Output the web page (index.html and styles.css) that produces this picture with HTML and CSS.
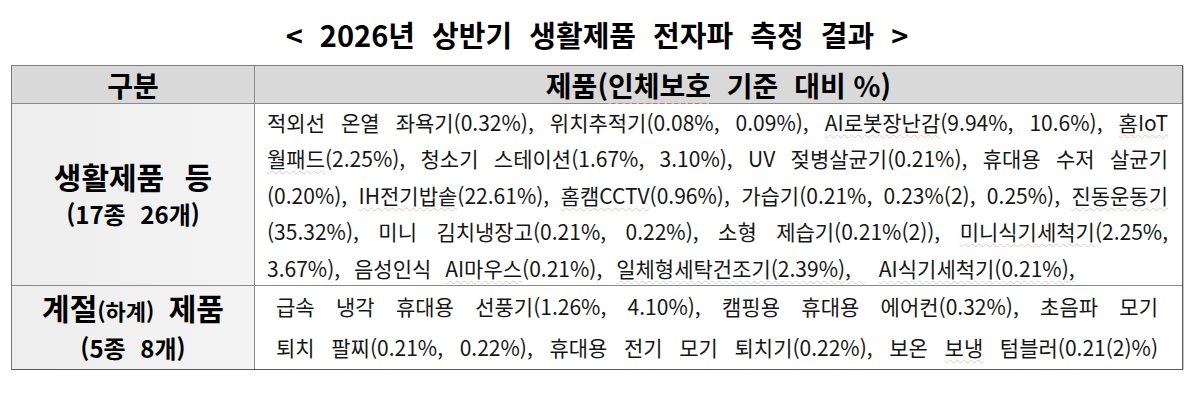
FILE: index.html
```html
<!DOCTYPE html>
<html lang="ko">
<head>
<meta charset="utf-8">
<title>2026년 상반기 생활제품 전자파 측정 결과</title>
<link rel="stylesheet" href="styles.css">
</head>
<body>
<div class="page">
  <h1 class="title"><span>&lt; 2026년 상반기 생활제품 전자파 측정 결과 &gt;</span></h1>
  <div class="table">
    <div class="cell head head-left"><span>구분</span></div>
    <div class="cell head head-right"><span>제품(<span class="sp-red">인체보호</span> 기준 대비<span class="ns"> %)</span></span></div>

    <div class="cell side">
      <div class="side-main">생활제품 등</div>
      <div class="side-sub">(17종 26개)</div>
    </div>
    <div class="cell body body-1">
      <div class="ln j">적외선 온열 좌욕기(0.32%), 위치추적기(0.08%, 0.09%), <span class="sp-red">AI로봇장난감</span>(9.94%, 10.6%), <span class="sp-red">홈IoT</span></div>
      <div class="ln j"><span class="sp-blue">월패드</span>(2.25%), 청소기 스테이션(1.67%, 3.10%), UV 젖병살균기(0.21%), 휴대용 수저 살균기</div>
      <div class="ln j">(0.20%), <span class="sp-red">IH전기밥솥</span>(22.61%), <span class="sp-red">홈캠CCTV</span>(0.96%), 가습기(0.21%, 0.23%(2), 0.25%), <span class="sp-red">진동운동기</span></div>
      <div class="ln j">(35.32%), 미니 김치냉장고(0.21%, 0.22%), 소형 제습기(0.21%(2)), <span class="sp-red">미니식기세척기</span>(2.25%,</div>
      <div class="ln last">3.67%), 음성인식 <span class="sp-red">AI마우스</span>(0.21%), <span class="sp-blue">일체형세탁건조기(2.39%), <span class="gap">AI식기세척기(0.21%),</span></span></div>
    </div>

    <div class="cell side side-last">
      <div class="side-main tight">계절<span class="small">(하계)</span> 제품</div>
      <div class="side-sub">(5종 8개)</div>
    </div>
    <div class="cell body body-2">
      <div class="ln j">급속 냉각 휴대용 선풍기(1.26%, 4.10%), 캠핑용 휴대용 에어컨(0.32%), 초음파 모기</div>
      <div class="ln j">퇴치 팔찌(0.21%, 0.22%), 휴대용 전기 모기 퇴치기(0.22%), 보온 <span class="sp-red">보냉</span> 텀블러(0.21(2)%)</div>
    </div>
  </div>
</div>
</body>
</html>
```

FILE: styles.css
```css
html, body {
  margin: 0;
  padding: 0;
  background: #ffffff;
}

body {
  font-family: "Noto Sans CJK KR", "Noto Sans", sans-serif;
  color: #111111;
}

.page {
  width: 1172px;
  padding-left: 11px;
}

.title {
  margin: 0;
  height: 65px;
  display: flex;
  align-items: center;
  justify-content: center;
  padding-top: 4px;
  box-sizing: border-box;
  font-size: 29px;
  font-weight: 700;
  line-height: 1;
  word-spacing: 9px;
  color: #000;
}

.table {
  display: grid;
  grid-template-columns: 243px 1fr;
  grid-template-rows: 38px 182px 83px;
  border: 1px solid #7a7a7a;
  border-right-color: #5a5a5a;
  border-bottom-color: #5a5a5a;
  box-shadow: 1px 1px 0 #c8c8c8;
}

.cell {
  border-right: 1px solid #8a8a8a;
  border-bottom: 1px solid #8a8a8a;
  box-sizing: border-box;
}

.cell:nth-child(2n) {
  border-right: none;
}

.side-last,
.body-2 {
  border-bottom: none;
}

.head {
  background: #d9d9d9;
  display: flex;
  align-items: center;
  justify-content: center;
  font-size: 28px;
  font-weight: 700;
  line-height: 1;
  color: #000;
  word-spacing: 8px;
}

.head .ns {
  word-spacing: 0;
}

.side {
  background: linear-gradient(90deg, #ededed, #f4f4f4);
  display: flex;
  flex-direction: column;
  align-items: center;
  justify-content: center;
  color: #000;
  font-weight: 700;
}

.side-main {
  font-size: 30px;
  line-height: 38px;
  word-spacing: 12px;
}

.side-main.tight {
  word-spacing: 6px;
}

.side-main .small {
  font-size: 22px;
}

.side-sub {
  font-size: 24px;
  line-height: 38px;
  word-spacing: 8px;
}

.body {
  font-size: 21px;
  color: #161616;
}

.body-1 {
  padding: 0 14px 0 12px;
  line-height: 36.4px;
}

.body-2 {
  padding: 0 24px 0 21px;
  line-height: 41px;
}

.ln.j {
  text-align: justify;
  text-align-last: justify;
}

.ln.last {
  word-spacing: 8px;
}

.ln.last .gap {
  margin-left: 14px;
}

.sp-red {
  text-decoration: underline wavy #f0c0c0;
  text-decoration-thickness: 1px;
  text-underline-offset: 3px;
}

.sp-blue {
  text-decoration: underline wavy #c4d0f0;
  text-decoration-thickness: 1px;
  text-underline-offset: 3px;
}
```
